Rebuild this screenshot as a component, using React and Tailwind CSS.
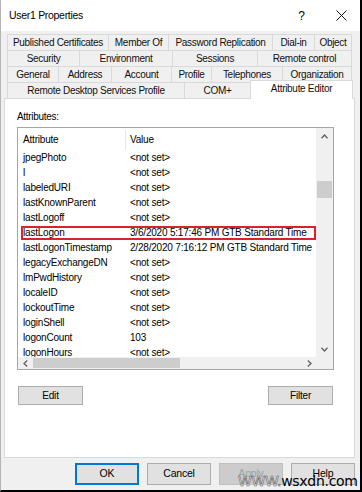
import React from "react";

const tabRows = [
  [
    { t: "Published Certificates", w: "w-[101px]" },
    { t: "Member Of", w: "w-[60px]" },
    { t: "Password Replication", w: "w-[104px]" },
    { t: "Dial-in", w: "w-[42px]" },
    { t: "Object", w: "w-[38px]", last: true },
  ],
  [
    { t: "Security", w: "w-[72px]" },
    { t: "Environment", w: "w-[93px]" },
    { t: "Sessions", w: "w-[85px]" },
    { t: "Remote control", w: "w-[95px]", last: true },
  ],
  [
    { t: "General", w: "w-[51px]" },
    { t: "Address", w: "w-[53px]" },
    { t: "Account", w: "w-[60px]" },
    { t: "Profile", w: "w-[40px]" },
    { t: "Telephones", w: "w-[71px]" },
    { t: "Organization", w: "w-[70px]", last: true },
  ],
];

const rows = [
  ["jpegPhoto", "<not set>"],
  ["l", "<not set>"],
  ["labeledURI", "<not set>"],
  ["lastKnownParent", "<not set>"],
  ["lastLogoff", "<not set>"],
  ["lastLogon", "3/6/2020 5:17:46 PM GTB Standard Time", true],
  ["lastLogonTimestamp", "2/28/2020 7:16:12 PM GTB Standard Time"],
  ["legacyExchangeDN", "<not set>"],
  ["lmPwdHistory", "<not set>"],
  ["localeID", "<not set>"],
  ["lockoutTime", "<not set>"],
  ["loginShell", "<not set>"],
  ["logonCount", "103"],
  ["logonHours", "<not set>"],
];

function Tab({ t, w, last }) {
  return (
    <div
      className={`${w} h-[16px] shrink-0 border-t border-l ${
        last ? "border-r" : ""
      } border-[#d9d9d9] bg-[#f0f0f0] flex items-center justify-center text-[10px] leading-none tracking-[-0.3px] text-[#111] whitespace-nowrap`}
    >
      {t}
    </div>
  );
}

function Btn({ children, className = "" }) {
  return (
    <div
      className={`h-[19px] w-[65px] border border-[#adadad] bg-[#e1e1e1] flex items-center justify-center text-[10px] tracking-[-0.2px] text-black ${className}`}
    >
      {children}
    </div>
  );
}

export default function App() {
  return (
    <div className="relative w-[362px] h-[492px] bg-[#f0f0f0] border-l border-l-[#b4b4b4] border-r-2 border-b-2 border-r-black border-b-black flex flex-col font-['Liberation_Sans',Arial,sans-serif] overflow-hidden select-none">
      {/* Title bar */}
      <div className="h-[31px] bg-white flex items-center pl-[8px] pr-[13px] shrink-0">
        <div className="text-[10.5px] tracking-[-0.3px] text-black">User1 Properties</div>
        <div className="ml-auto text-[12px] text-black leading-none">?</div>
        <svg className="ml-[31px]" width="11" height="11" viewBox="0 0 11 11">
          <path d="M0.5 0.5 L10.5 10.5 M10.5 0.5 L0.5 10.5" stroke="#111" strokeWidth="1" fill="none" />
        </svg>
      </div>

      {/* Tabs */}
      <div className="mt-[3px] ml-[6px] w-[345px] flex flex-col shrink-0">
        {tabRows.map((r, i) => (
          <div key={i} className="flex h-[16px]">
            {r.map((tab) => (
              <Tab key={tab.t} {...tab} />
            ))}
          </div>
        ))}
        <div className="flex items-end h-[16px] relative z-10">
          <Tab t="Remote Desktop Services Profile" w="w-[177px]" />
          <Tab t="COM+" w="w-[66px]" />
          <div className="w-[103px] h-[19px] -mb-px -mr-px shrink-0 border-t border-l border-r border-[#d9d9d9] bg-white flex items-center justify-center text-[10px] leading-none tracking-[-0.3px] text-[#111] whitespace-nowrap pb-[2px]">
            Attribute Editor
          </div>
        </div>
      </div>

      {/* Panel */}
      <div className="ml-[3px] w-[351px] h-[360px] bg-white border border-[#d9d9d9] pl-[12px] pt-[11px] flex flex-col shrink-0">
        <div className="h-[14px] leading-[14px] text-[10px] tracking-[-0.3px] text-black">Attributes:</div>

        <div className="mt-[3px] w-[317px] h-[243px] border border-[#a6a6a6] flex flex-col bg-white">
          <div className="flex flex-1 min-h-0">
            <div className="w-[298px] overflow-hidden relative">
              {/* header */}
              <div className="h-[22px] flex items-center relative text-[10px] tracking-[-0.2px] text-black">
                <div className="pl-[5px] w-[107px]">Attribute</div>
                <div className="absolute left-[107px] top-[2px] h-[20px] w-px bg-[#e5e5e5]" />
                <div className="pl-[5px]">Value</div>
              </div>
              {rows.map(([a, v, hl]) => (
                <div key={a} className="h-[15px] flex items-center relative text-[10px] tracking-[-0.2px] text-black whitespace-nowrap">
                  <div className="pl-[5px] w-[112px] shrink-0">{a}</div>
                  <div>{v}</div>
                  {hl && (
                    <div className="absolute left-[3px] right-0 top-px bottom-0 border-2 border-[#d8232a]" />
                  )}
                </div>
              ))}
            </div>
            {/* vertical scrollbar */}
            <div className="w-[17px] bg-[#f0f0f0] flex flex-col items-center">
              <div className="h-[17px] flex items-center justify-center">
                <svg width="7" height="5" viewBox="0 0 7 5">
                  <path d="M0.5 4.2 L3.5 1 L6.5 4.2" stroke="#606060" strokeWidth="1.3" fill="none" />
                </svg>
              </div>
              <div className="flex-1 w-full relative">
                <div className="absolute left-[1px] right-[1px] top-[36px] h-[17px] bg-[#cdcdcd]" />
              </div>
              <div className="h-[16px] flex items-center justify-center">
                <svg width="7" height="5" viewBox="0 0 7 5">
                  <path d="M0.5 0.8 L3.5 4 L6.5 0.8" stroke="#606060" strokeWidth="1.3" fill="none" />
                </svg>
              </div>
            </div>
          </div>
          {/* horizontal scrollbar */}
          <div className="h-[12px] flex shrink-0">
            <div className="w-[298px] bg-[#f0f0f0] relative flex items-center">
              <svg className="absolute left-[5px]" width="5" height="7" viewBox="0 0 5 7">
                <path d="M4.2 0.5 L1 3.5 L4.2 6.5" stroke="#606060" strokeWidth="1.3" fill="none" />
              </svg>
              <div className="absolute left-[15px] w-[147px] top-[1px] bottom-[1px] bg-[#cdcdcd]" />
              <svg className="absolute left-[289px]" width="5" height="7" viewBox="0 0 5 7">
                <path d="M0.8 0.5 L4 3.5 L0.8 6.5" stroke="#606060" strokeWidth="1.3" fill="none" />
              </svg>
            </div>
            <div className="w-[17px] bg-[#f0f0f0]" />
          </div>
        </div>

        <div className="mt-[16px] w-[317px] flex justify-between">
          <Btn className="ml-px">Edit</Btn>
          <Btn className="mr-px">Filter</Btn>
        </div>
      </div>

      {/* Bottom buttons */}
      <div className="mt-[5px] flex justify-end gap-[8px] pr-[5px] shrink-0">
        <div className="w-[64px] h-[22px] border-2 border-[#0078d7] bg-[#e1e1e1] flex items-center justify-center text-[10.5px] tracking-[-0.2px] text-black">OK</div>
        <div className="w-[64px] h-[22px] border border-[#adadad] bg-[#e1e1e1] flex items-center justify-center text-[10.5px] tracking-[-0.2px] text-black">Cancel</div>
        <div className="w-[64px] h-[22px] border border-[#bfbfbf] bg-[#cccccc] flex items-center justify-center text-[10.5px] tracking-[-0.2px] text-[#a0a0a0]">Apply</div>
        <div className="w-[64px] h-[22px] border border-[#adadad] bg-[#e1e1e1] flex items-center justify-center text-[10.5px] tracking-[-0.2px] text-black">Help</div>
      </div>

      {/* watermark */}
      <div className="absolute left-[237px] top-[474px] text-[14px] leading-none whitespace-nowrap tracking-[-0.3px] font-['DejaVu_Sans',sans-serif]">
        <span className="text-white [-webkit-text-stroke:0.6px_#555]">WWW.</span>
        <span className="text-black">wsxdn.com</span>
      </div>
    </div>
  );
}
